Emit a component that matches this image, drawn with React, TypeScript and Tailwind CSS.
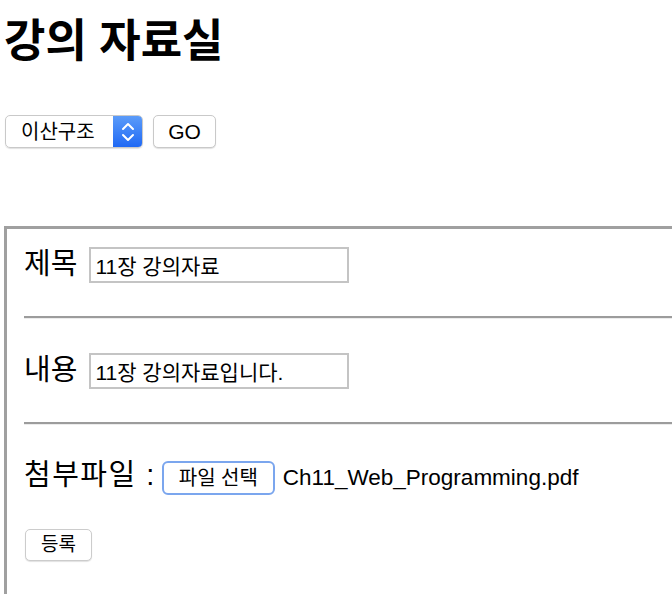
import React from 'react';

const FONT = '"Liberation Sans", "Noto Sans CJK KR", sans-serif';

function Divider() {
  return <div className="ml-[17px] h-[3px] border-t-2 border-b border-t-[#9c9c9c] border-b-[#ececec]" />;
}

function TextRow({ label, value }: { label: string; value: string }) {
  return (
    <div className="ml-[17px] flex items-baseline gap-[12px]">
      <span className="text-[29px] leading-none">{label}</span>
      <input
        readOnly
        value={value}
        className="h-[36px] w-[260px] border-2 border-[#c4c4c4] bg-white px-[4px] text-[21px] outline-none"
        style={{ fontFamily: FONT }}
      />
    </div>
  );
}

export default function App() {
  return (
    <div className="h-[594px] w-[672px] overflow-hidden bg-white text-black" style={{ fontFamily: FONT }}>
      <h1 className="pl-[4px] pt-[15px] text-[45px] leading-[54px] font-bold">강의 자료실</h1>

      <div className="ml-[5px] mt-[46px] flex gap-[10px]">
        <div className="flex h-[33px] w-[138px] overflow-hidden rounded-[5px] border border-[#c9c9c9] shadow-[0_1px_1px_rgba(0,0,0,0.12)]">
          <div className="flex flex-1 items-center pl-[15px] text-[20px]">이산구조</div>
          <div className="flex w-[29px] items-center justify-center bg-gradient-to-b from-[#5b9bf9] to-[#1f68f4]">
            <svg width="14" height="24" viewBox="0 0 14 24" fill="none" stroke="white" strokeWidth="2" strokeLinecap="round" strokeLinejoin="round">
              <path d="M2 9 L7 4 L12 9" />
              <path d="M2 15 L7 20 L12 15" />
            </svg>
          </div>
        </div>
        <button className="h-[33px] w-[63px] rounded-[5px] border border-[#c9c9c9] bg-white text-[21px] shadow-[0_1px_1px_rgba(0,0,0,0.12)]">
          GO
        </button>
      </div>

      <div className="ml-[4px] mt-[78px] h-[400px] w-[720px] border-[3px] border-[#a0a0a0] pt-[18px]">
        <TextRow label="제목" value="11장 강의자료" />
        <div className="mt-[33px]">
          <Divider />
        </div>
        <div className="mt-[34px]">
          <TextRow label="내용" value="11장 강의자료입니다." />
        </div>
        <div className="mt-[33px]">
          <Divider />
        </div>
        <div className="ml-[17px] mt-[36px] flex items-baseline">
          <span className="text-[29px] leading-none tracking-[1.5px]">첨부파일 :</span>
          <button className="ml-[6px] h-[34px] w-[113px] rounded-[6px] border-2 border-[#7ba6ee] bg-white text-[20px]">
            파일 선택
          </button>
          <span className="ml-[8px] text-[22.5px] leading-none">Ch11_Web_Programming.pdf</span>
        </div>
        <button className="ml-[18px] mt-[34px] h-[32px] w-[67px] rounded-[5px] border border-[#cccccc] bg-white text-[19px] shadow-[0_1px_1px_rgba(0,0,0,0.12)]">
          등록
        </button>
      </div>
    </div>
  );
}
